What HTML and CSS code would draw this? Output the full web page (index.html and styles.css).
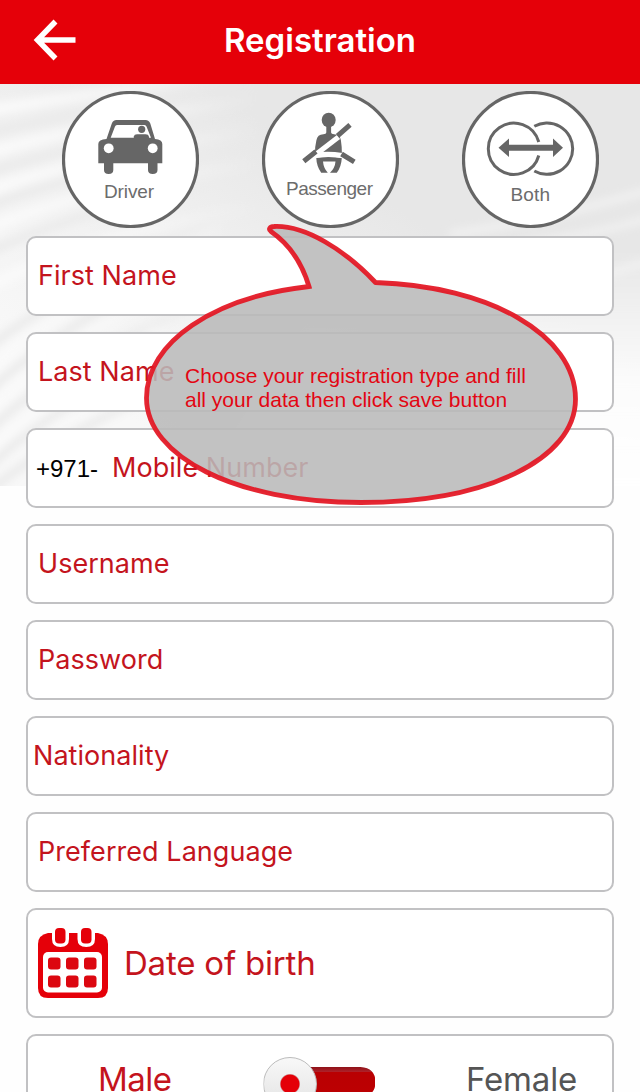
FILE: index.html
```html
<!DOCTYPE html>
<html lang="en">
<head>
<meta charset="utf-8">
<title>Registration</title>
<link rel="stylesheet" href="styles.css">
</head>
<body>
<div class="screen">
  <header class="topbar">
    <svg class="back" viewBox="0 0 46 44" aria-label="Back"><path d="M44.500 22H7M24.500 3.500L6.500 22L24.500 40.500" fill="none" stroke="#fff" stroke-width="5.5"/></svg>
    <h1 class="title">Registration</h1>
  </header>
  <main class="content">
    <svg class="backdrop" viewBox="0 84 640 402" preserveAspectRatio="none" aria-hidden="true">
      <defs>
        <linearGradient id="shade" x1="0.12" y1="0.75" x2="0.78" y2="0.1"><stop offset="0" stop-color="#f8f8f8"/><stop offset=".45" stop-color="#efefef"/><stop offset=".72" stop-color="#e7e7e7"/><stop offset="1" stop-color="#e7e7e7"/></linearGradient>
        <linearGradient id="fade" x1="0" y1="0" x2="0" y2="1"><stop offset=".2" stop-color="#fff" stop-opacity="0"/><stop offset=".62" stop-color="#fff" stop-opacity=".85"/><stop offset="1" stop-color="#fff"/></linearGradient>
        <linearGradient id="trail" gradientUnits="userSpaceOnUse" x1="0" y1="0" x2="270" y2="0"><stop offset="0" stop-color="#eaeaea"/><stop offset=".4" stop-color="#ebebeb"/><stop offset="1" stop-color="#ebebeb" stop-opacity="0"/></linearGradient>
        <linearGradient id="glow" gradientUnits="userSpaceOnUse" x1="0" y1="0" x2="260" y2="0"><stop offset="0" stop-color="#fafafa"/><stop offset=".5" stop-color="#f7f7f7" stop-opacity=".8"/><stop offset="1" stop-color="#f5f5f5" stop-opacity="0"/></linearGradient>
        <filter id="soft" x="-20%" y="-20%" width="140%" height="140%"><feGaussianBlur stdDeviation="4"/></filter>
      </defs>
      <rect y="84" width="640" height="402" fill="url(#shade)"/>
      <g filter="url(#soft)" fill="none" stroke-width="8">
        <g stroke="url(#trail)"><path d="M-10 132Q100 108 260 84M-10 172Q80 142 270 116M-10 206Q80 168 280 144M-10 252Q110 196 280 178"/>
        <path d="M-10 346Q70 285 220 218M-10 390Q60 325 220 245M-10 430Q60 360 200 305M-10 466Q30 425 130 370M-10 490Q60 435 160 390"/></g>
        <path stroke="url(#glow)" stroke-width="12" d="M-10 110Q90 94 240 74M-10 152Q90 125 260 98M-10 190Q80 158 260 130M-10 228Q80 188 270 162M-10 286Q110 226 280 205M-10 370Q60 306 220 228M-10 410Q60 340 180 285M-10 450Q60 390 160 330"/>
      </g>
      <path filter="url(#soft)" d="M390 260Q510 230 660 188V500H200L300 320Z" fill="url(#fade)"/>
      <g filter="url(#soft)" fill="none" stroke="#f3f3f3" stroke-width="6"><path d="M450 234Q540 222 650 190M520 244Q590 236 650 218M600 278Q620 268 650 262"/></g>
    </svg>

    <div class="types">
      <svg class="type" viewBox="12 7 137 137" role="img">
        <circle cx="80.5" cy="75.5" r="67" class="ring"/>
        <g fill="#666">
          <path fill-rule="evenodd" d="M66.500 36H95.500Q99 36 100.300 39.500L105 55Q112.300 55.500 112.300 60V79.300H48.300V60Q48.300 55.500 56.500 55L61.800 39.500Q63 36 66.500 36zM67 41Q65.500 41 65 42.500L60.700 53.700H101L96.500 42.500Q96 41 94.500 41z"/>
          <path d="M54 78h9.300v8q0 4-4.650 4t-4.650-4zM98 78h9.500v8q0 4-4.750 4t-4.750-4z"/>
          <circle cx="91.700" cy="45.300" r="3.600"/><path d="M83.800 54v-1.500q.5-2.300 3.200-2.300h8.500q3 0 3.500 2.300v1.500z"/>
        </g>
        <circle cx="58.700" cy="64.300" r="4.900" fill="#fff"/><circle cx="102.700" cy="64.300" r="4.900" fill="#fff"/>
        <text x="54" y="114" textLength="50" class="label">Driver</text>
      </svg>
      <svg class="type" viewBox="12 7 137 137" role="img">
        <circle cx="80.500" cy="75.500" r="67" class="ring"/>
        <g fill="#666">
          <ellipse cx="78.700" cy="36" rx="7" ry="7.300"/>
          <path d="M76.300 41h4.800v7.500q0 1.500 3 1.700 6 .4 6.800 6 1 6 1 14-13-3-27 0 0-8 1.500-14 1-5.800 7-6 2.900-.2 2.900-1.700z"/>
          <path d="M66.300 74q12.500-1.800 25.500 0-.5 9-5 14.800H80Q85 84 85.500 77.500H73Q73.500 84 77.800 88.800H71.200Q66.500 82 66.300 74z"/>
        </g>
        <path d="M64.500 71.500L88.500 53" stroke="#fff" stroke-width="5.200"/>
        <path d="M64.500 68.700q14-1.800 28 .3v5.200q-14-2.200-28-.2z" fill="#fff"/>
        <path d="M53.800 77.300L66 67.500M87.500 51.800L100 40.800M91.500 70L104.300 77.800" fill="none" stroke="#666" stroke-width="5"/>
        <text x="36" y="110.500" textLength="87" class="label">Passenger</text>
      </svg>
      <svg class="type" viewBox="12 7 137 137" role="img">
        <circle cx="80.500" cy="75.500" r="67" class="ring"/>
        <g fill="none" stroke="#666" stroke-width="3">
          <path d="M88.800 58A25.700 25.700 0 1 0 88.800 71.500"/>
          <path d="M84.300 42.300A25.700 25.700 0 1 1 84.300 87"/>
        </g>
        <path fill="#666" d="M48.500 63.700L59 54.500V60.800H103V54.500L113 63.700L103 73V66.800H59V73z"/>
        <text x="60.500" y="117" textLength="39.500" class="label">Both</text>
      </svg>
    </div>

    <form class="fields">
      <label class="field"><span class="name">First Name</span></label>
      <label class="field"><span class="name">Last Name</span></label>
      <label class="field phone"><span class="prefix">+971-</span><span class="name">Mobile Number</span></label>
      <label class="field"><span class="name">Username</span></label>
      <label class="field"><span class="name">Password</span></label>
      <label class="field nation"><span class="name">Nationality</span></label>
      <label class="field"><span class="name">Preferred Language</span></label>
      <label class="field birth">
        <svg class="calendar" viewBox="0 0 70 70" aria-hidden="true">
          <path fill="#e50009" d="M10 5H60Q70 7 70 16V60Q70 70 60 70H10Q0 70 0 60V16Q0 7 10 5z"/>
          <path fill="#fff" d="M14 0H31V11Q31 19 22.500 19T14 11zM39.500 0H57V11Q57 19 48.250 19T39.500 11z"/>
          <rect x="17" y="0" width="10.500" height="15.500" rx="4" fill="#e50009"/><rect x="43" y="0" width="10.500" height="15.500" rx="4" fill="#e50009"/>
          <rect x="5" y="24" width="59" height="40.500" rx="5" fill="#fff"/>
          <g fill="#dc0710"><rect x="10" y="29.500" width="12.500" height="12" rx="3"/><rect x="28" y="29.500" width="12.500" height="12" rx="3"/><rect x="46" y="29.500" width="12.500" height="12" rx="3"/><rect x="10" y="47.500" width="12.500" height="12" rx="3"/><rect x="28" y="47.500" width="12.500" height="12" rx="3"/><rect x="46" y="47.500" width="12.500" height="12" rx="3"/></g>
        </svg>
        <span class="large">Date of birth</span>
      </label>
      <div class="field gender">
        <span class="large male">Male</span>
        <span class="switch"><span class="knob"></span></span>
        <span class="large female">Female</span>
      </div>
    </form>

    <div class="bubble">
      <svg class="shape" viewBox="140 220 442 290" aria-hidden="true">
        <path d="M309 286.500C302 263 289 244 271 231.500C268 229 270 226.500 274 226.500C305 225 345 250 375.500 282.500C490 286 575.500 335 575.500 399C575.500 460 485 502.500 361 502.500C235 502.500 146.500 456 146.500 398C146.500 342 214 297 309 286.500Z" fill="#bababa" fill-opacity=".88"/>
        <path d="M309 286.500C302 263 289 244 271 231.500C268 229 270 226.500 274 226.500C305 225 345 250 375.500 282.500C490 286 575.500 335 575.500 399C575.500 460 485 502.500 361 502.500C235 502.500 146.500 456 146.500 398C146.500 342 214 297 309 286.500Z" fill="none" stroke="#e31522" stroke-opacity=".93" stroke-width="4.800"/>
      </svg>
      <p class="hint">Choose your registration type and fill<br>all your data then click save button</p>
    </div>
  </main>
</div>
</body>
</html>
```
FILE: styles.css
```css
* { box-sizing: border-box; }
body { margin: 0; background: #fff; font-family: Inter, "Liberation Sans", sans-serif; }
.screen { width: 640px; height: 1092px; overflow: hidden; background: #fefefe; }
.topbar { height: 84px; background: #e50009; display: grid; grid-template-columns: 96px 1fr 96px; align-items: center; padding-bottom: 4px; }
.back { width: 46px; height: 44px; margin-left: 31px; }
.title { margin: 0; text-align: center; color: #fff; font-size: 33px; font-weight: 600; line-height: 40px; }
.content { position: relative; padding: 7px 26px 0; }
.backdrop { position: absolute; left: 0; top: 0; width: 640px; height: 402px; }
.types { position: relative; display: flex; justify-content: space-between; padding: 0 15px 0 36px; height: 145px; }
.type { width: 137px; height: 137px; }
.ring { fill: #fff; stroke: #666; stroke-width: 3.2; }
.label { font: 19px "Liberation Sans", sans-serif; fill: #6c6c6c; }
.fields { position: relative; display: flex; flex-direction: column; gap: 16px; }
.field { height: 80px; flex: none; border: 2px solid #c1c1c3; border-radius: 10px; background: #fff; display: flex; align-items: center; padding: 0 10px; color: #c4141d; }
.name { font-size: 27px; line-height: 34px; letter-spacing: .05px; }
.phone { padding-left: 8px; }
.prefix { width: 76px; color: #000; font: 24px "Liberation Sans", sans-serif; padding-top: 1px; }
.nation { padding-left: 5px; }
.birth { height: 110px; gap: 16px; }
.calendar { width: 70px; height: 70px; }
.large { font-size: 33px; line-height: 40px; letter-spacing: -.2px; }
.gender { height: 110px; align-items: flex-start; padding: 21px 35px 0 70px; }
.gender .large { line-height: 32px; padding-top: 6px; }
.gender .male { width: 166px; letter-spacing: -.5px; }
.gender .female { margin-left: 91px; color: #555; }
.switch { width: 112px; height: 54px; display: flex; background: linear-gradient(#8e1118, #b0222a 5px, #b90002 5px, #bd0002) 28px 10px / 84px 30px no-repeat; clip-path: path("M0 0H56V10H97Q112 11 112 25T97 40H56V54H0Z"); }
.knob { width: 54px; height: 54px; border-radius: 50%; border: 1px solid #bbb; background: radial-gradient(circle, #e40008 0 9px, #d5c4c4 10px, transparent 10.5px), linear-gradient(#f8f8f8, #e2e2e2); }
.bubble { position: absolute; left: 140px; top: 136px; width: 442px; height: 290px; display: grid; }
.shape { grid-area: 1 / 1; width: 442px; height: 290px; }
.hint { grid-area: 1 / 1; margin: 0; padding: 144px 0 0 45px; color: #e30613; font: 21px/24px "Liberation Sans", sans-serif; white-space: nowrap; }
```
